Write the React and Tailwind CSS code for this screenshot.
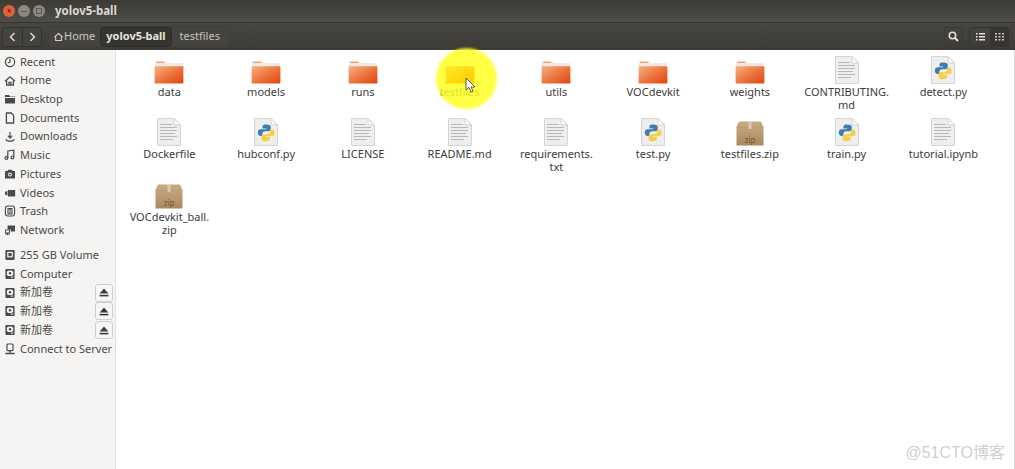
import React from "react";

const font = { fontFamily: '"Noto Sans", "Noto Sans CJK SC", sans-serif' };

const SideIcon = ({ name }) => {
  const common = { width: 12, height: 12, viewBox: "0 0 12 12", className: "shrink-0 text-[#4a4a4a]" };
  switch (name) {
    case "recent":
      return (
        <svg {...common} fill="none" stroke="currentColor" strokeWidth="1.2">
          <circle cx="6" cy="6" r="4.6" />
          <path d="M6 3v3.2L3.8 7" />
        </svg>
      );
    case "home":
      return (
        <svg {...common} fill="none" stroke="currentColor" strokeWidth="1.3">
          <path d="M1 6.2 6 1.8l5 4.4" />
          <path d="M2.6 5.4v4.8h6.8V5.4" />
          <path d="M5 10V7.4h2V10" />
        </svg>
      );
    case "desktop":
      return (
        <svg {...common} fill="currentColor">
          <path d="M1 2h4l1 1.4h5V4H1zM1 5h10v5.4H1z" />
        </svg>
      );
    case "documents":
      return (
        <svg {...common} fill="none" stroke="currentColor" strokeWidth="1.3">
          <path d="M2.4 1h4.8l2.4 2.4V11H2.4z" />
        </svg>
      );
    case "downloads":
      return (
        <svg {...common} fill="none" stroke="currentColor" strokeWidth="1.2">
          <path d="M6 1v5.4M3.8 4.6 6 7l2.2-2.4" />
          <path d="M1.8 8.2c1 2.6 7.4 2.6 8.4 0" />
        </svg>
      );
    case "music":
      return (
        <svg {...common} fill="none" stroke="currentColor" strokeWidth="1.2">
          <path d="M3.8 9V2l6-.8V8" />
          <circle cx="2.4" cy="9" r="1.4" />
          <circle cx="8.4" cy="8.4" r="1.4" />
        </svg>
      );
    case "pictures":
      return (
        <svg {...common}>
          <path d="M1 3h2.4l.8-1.2h3.6L8.6 3H11v7.4H1z" fill="currentColor" />
          <circle cx="6" cy="6.6" r="2" fill="#f5f4f2" />
          <circle cx="6" cy="6.6" r="1" fill="currentColor" />
        </svg>
      );
    case "videos":
      return (
        <svg {...common} fill="currentColor">
          <path d="M4 3h7.2v6.4H4zM1 5l2.4-1.2v4.8L1 7.4z" />
        </svg>
      );
    case "trash":
      return (
        <svg {...common} fill="none" stroke="currentColor" strokeWidth="1.1">
          <rect x="1.4" y="1" width="9.2" height="10" rx="2.4" />
          <path d="M3.4 3.6h5.2M4 3.6V9h4V3.6M6 4v5" />
        </svg>
      );
    case "network":
      return (
        <svg {...common} fill="currentColor">
          <path d="M3.6 1.4H11v6H6.8V5.4H3.6z" />
          <path d="M1 5.4h5v4.2H4.4v.8h1.4v.6H1.2v-.6h1.4v-.8H1z" />
          <rect x="2" y="6.4" width="3" height="2" fill="#f5f4f2" />
        </svg>
      );
    case "volume":
      return (
        <svg {...common}>
          <rect x="1.4" y="1" width="9.2" height="10" rx="1" fill="currentColor" />
          <rect x="3.2" y="2.8" width="5.6" height="5.6" fill="#f5f4f2" />
          <rect x="4.4" y="4" width="3.2" height="3.2" fill="currentColor" />
        </svg>
      );
    case "drive":
      return (
        <svg {...common}>
          <rect x="1.4" y="1" width="9.2" height="10" rx="1" fill="currentColor" />
          <rect x="2.8" y="2.4" width="6.4" height="5.6" rx="2" fill="#f5f4f2" />
          <circle cx="6" cy="5.2" r="1.2" fill="currentColor" />
          <rect x="6.8" y="8.6" width="2.4" height="1" fill="#f5f4f2" />
        </svg>
      );
    default:
      return (
        <svg {...common} fill="none" stroke="currentColor" strokeWidth="1.2">
          <rect x="3" y="1" width="6" height="6.6" rx="1" />
          <path d="M6 7.6v2M1.4 10.4h9.2" strokeWidth="1.5" />
        </svg>
      );
  }
};

const Eject = () => (
  <button className="w-[18px] h-[18px] flex items-center justify-center rounded-[3px] border border-[#d0cfcc] bg-[#f8f7f6]">
    <svg width="10" height="9" viewBox="0 0 10 9" fill="#3c3c3c">
      <path d="M5 0.5 9.4 5.6H0.6z" />
      <rect x="0.6" y="6.8" width="8.8" height="1.6" />
    </svg>
  </button>
);

const places = [
  ["recent", "Recent"],
  ["home", "Home"],
  ["desktop", "Desktop"],
  ["documents", "Documents"],
  ["downloads", "Downloads"],
  ["music", "Music"],
  ["pictures", "Pictures"],
  ["videos", "Videos"],
  ["trash", "Trash"],
  ["network", "Network"],
];

const devices = [
  ["volume", "255 GB Volume"],
  ["drive", "Computer"],
  ["drive", "新加卷", true],
  ["drive", "新加卷", true],
  ["drive", "新加卷", true],
  ["server", "Connect to Server"],
];

const SideRow = ({ icon, label, eject }) => (
  <div className="h-[18.7px] flex items-center pl-[4px] pr-[2px] gap-[4px] whitespace-nowrap">
    <SideIcon name={icon} />
    <span className="flex-1 text-[11px] text-[#4a4a4a]">{label}</span>
    {eject && <Eject />}
  </div>
);

const Folder = ({ lit }) => {
  const id = lit ? "folderLit" : "folderOrange";
  return (
    <svg width="30" height="24" viewBox="0 0 30 24" className={lit ? "relative z-10" : ""}>
      <defs>
        <linearGradient id={id} x1="0" y1="0" x2="1" y2="1">
          <stop offset="0" stopColor={lit ? "#ffe92a" : "#f6b184"} />
          <stop offset="0.55" stopColor={lit ? "#ffd80f" : "#ec7138"} />
          <stop offset="1" stopColor={lit ? "#ffc800" : "#de4413"} />
        </linearGradient>
      </defs>
      {!lit && <path d="M1 2.5Q1 1 2.4 1H11l2 2h15.6Q29 3 29 4.5V8H1z" fill="#efe9e2" />}
      {!lit && <rect x="2.4" y="1.8" width="7.6" height="1" fill="#ee8a55" />}
      <path d="M0.6 6.2H29.4V22.4Q29.4 23.6 28 23.6H2Q0.6 23.6 0.6 22.4z" fill={`url(#${id})`} />
    </svg>
  );
};

const Doc = ({ children }) => (
  <svg width="24" height="28" viewBox="0 0 24 28">
    <path d="M0.5 0.5H17L23.5 7V27.5H0.5z" fill="#eeeeec" stroke="#d4d4d2" />
    <path d="M17 0.5V7H23.5z" fill="#fbfbfa" stroke="#d4d4d2" />
    {children || (
      <g fill="#b8b8b6">
        <rect x="3" y="6" width="12" height="1" />
        <rect x="3" y="9" width="17" height="1" />
        <rect x="3" y="12" width="17" height="1" />
        <rect x="3" y="15" width="15" height="1" />
        <rect x="3" y="18" width="17" height="1" />
        <rect x="3" y="21" width="13" height="1" />
      </g>
    )}
  </svg>
);

const Python = () => (
  <Doc>
    <path d="M12 6.5C8.4 6.5 8.5 8 8.5 9v1.5H12.3v.7H6.8C5 11.2 3.8 12.4 3.8 14.6s1.2 3.4 2.8 3.4H8.3v-2c0-1.7 1.4-2.8 2.9-2.8h3.5c1.2 0 2.1-1 2.1-2.2V9c0-1.4-1.4-2.5-4.8-2.5z" fill="#3f7cae" />
    <path d="M12.4 23C16 23 15.9 21.5 15.9 20.5V19H12.1v-.7H17.6c1.8 0 3-1.2 3-3.4s-1.2-3.4-2.8-3.4H16.1v2c0 1.7-1.4 2.8-2.9 2.8H9.7c-1.2 0-2.1 1-2.1 2.2v2.5c0 1.4 1.4 2.5 4.8 2.5z" fill="#f3cf4c" />
  </Doc>
);

const Zip = () => (
  <svg width="28" height="25" viewBox="0 0 28 25">
    <defs>
      <linearGradient id="box" x1="0" y1="0" x2="0" y2="1">
        <stop offset="0" stopColor="#c9ab83" />
        <stop offset="1" stopColor="#ab895f" />
      </linearGradient>
    </defs>
    <path d="M3 0.5H25L27.5 6V24.5H0.5V6z" fill="url(#box)" />
    <path d="M0.5 6.5H27.5" stroke="#bd9f77" />
    <rect x="12.5" y="1" width="3" height="7" fill="#dcc9ae" />
    <text x="14" y="21.5" textAnchor="middle" fontSize="8" fill="#6d5234" fontFamily="Noto Sans">zip</text>
  </svg>
);

const files = [
  ["folder", "data"],
  ["folder", "models"],
  ["folder", "runs"],
  ["lit", "testfiles"],
  ["folder", "utils"],
  ["folder", "VOCdevkit"],
  ["folder", "weights"],
  ["doc", "CONTRIBUTING.\nmd"],
  ["py", "detect.py"],
  ["doc", "Dockerfile"],
  ["py", "hubconf.py"],
  ["doc", "LICENSE"],
  ["doc", "README.md"],
  ["doc", "requirements.\ntxt"],
  ["py", "test.py"],
  ["zip", "testfiles.zip"],
  ["py", "train.py"],
  ["doc", "tutorial.ipynb"],
  ["zip", "VOCdevkit_ball.\nzip"],
];

const FileItem = ({ kind, label }) => (
  <div className="flex flex-col items-center">
    <div className="h-[28px] flex items-end">
      {kind === "folder" && <Folder />}
      {kind === "lit" && <Folder lit />}
      {kind === "doc" && <Doc />}
      {kind === "py" && <Python />}
      {kind === "zip" && <Zip />}
    </div>
    <div className="mt-[1px] text-[11px] leading-[13px] text-[#3c3c3c] text-center whitespace-pre">{label}</div>
  </div>
);

const WinButton = ({ color, children }) => (
  <div className={`w-[12px] h-[12px] rounded-full flex items-center justify-center ${color}`}>{children}</div>
);

const Crumb = ({ active, children }) => (
  <div
    className={`h-full flex items-center text-[11px] ${
      active ? "px-[5px] bg-[#37352f] font-bold text-[#e6e3dc] rounded-[3px] border border-[#2e2c28]" : "px-[8px] text-[#c4c1b9]"
    }`}
  >
    {children}
  </div>
);

export default function App() {
  return (
    <div style={font} className="w-[1015px] h-[469px] flex flex-col overflow-hidden bg-white">
      <div className="h-[22px] shrink-0 flex items-center pl-[3px] bg-gradient-to-b from-[#3c3a35] to-[#4f4d47]">
        <div className="flex gap-[3px]">
          <WinButton color="bg-[#e2603a]">
            <span className="text-[8px] leading-none font-bold text-[#5e2412]">×</span>
          </WinButton>
          <WinButton color="bg-[#8a8880]">
            <span className="w-[6px] h-[1px] bg-[#5a5850]" />
          </WinButton>
          <WinButton color="bg-[#8a8880]">
            <span className="w-[6px] h-[6px] border border-[#5a5850]" />
          </WinButton>
        </div>
        <span className="ml-[10px] text-[11.5px] font-bold text-[#dcd9d0]">yolov5-ball</span>
      </div>

      <div className="h-[28px] shrink-0 flex items-center pl-[2px] pr-[6px] py-[3px] bg-gradient-to-b from-[#47453f] to-[#3d3b35] border-t border-[#37352f]">
        <div className="h-[20px] w-[40px] flex rounded-[3px] border border-[#35332e] bg-[#45433d]">
          <div className="w-[20px] flex items-center justify-center border-r border-[#35332e]">
            <svg width="7" height="10" viewBox="0 0 7 10" fill="none" stroke="#e2dfd8" strokeWidth="1.4"><path d="M5.5 1 1.5 5l4 4" /></svg>
          </div>
          <div className="flex-1 flex items-center justify-center">
            <svg width="7" height="10" viewBox="0 0 7 10" fill="none" stroke="#e2dfd8" strokeWidth="1.4"><path d="M1.5 1l4 4-4 4" /></svg>
          </div>
        </div>
        <div className="ml-[6px] h-[22px] flex items-center rounded-[3px] border border-[#403e38] bg-[#45433d]">
          <div className="h-full flex items-center pl-[4px] pr-[5px] gap-[0px] text-[11px] text-[#c9c6be]">
            <svg width="11" height="10" viewBox="0 0 12 12" fill="none" stroke="#d8d5cd" strokeWidth="1.3">
              <path d="M1 6.2 6 1.8l5 4.4" />
              <path d="M2.6 5.4v4.8h6.8V5.4" />
            </svg>
            Home
          </div>
          <Crumb active>yolov5-ball</Crumb>
          <Crumb>testfiles</Crumb>
        </div>
        <div className="ml-auto w-[19px] h-[20px] flex items-center justify-center rounded-[3px] border border-[#3a3833]">
          <svg width="11" height="11" viewBox="0 0 11 11" fill="none" stroke="#e4e1da" strokeWidth="1.5">
            <circle cx="4.5" cy="4.5" r="3.2" />
            <path d="M7 7l3 3" strokeWidth="1.9" />
          </svg>
        </div>
        <div className="ml-[6px] h-[20px] w-[40px] flex rounded-[3px] border border-[#35332e]">
          <div className="w-[20px] flex items-center justify-center">
            <svg width="9" height="8" viewBox="0 0 9 8" fill="#e4e1da">
              <path d="M0 0h1.6v1.6H0zM3 0h6v1.6H3zM0 3h1.6v1.6H0zM3 3h6v1.6H3zM0 6h1.6v1.6H0zM3 6h6v1.6H3z" />
            </svg>
          </div>
          <div className="flex-1 flex items-center justify-center bg-[#37352f]">
            <svg width="9" height="8" viewBox="0 0 9 8" fill="#c9c6be">
              <path d="M0 0h2v1.6H0zM3.5 0h2v1.6h-2zM7 0h2v1.6H7zM0 3h2v1.6H0zM3.5 3h2v1.6h-2zM7 3h2v1.6H7zM0 6h2v1.6H0zM3.5 6h2v1.6h-2zM7 6h2v1.6H7z" />
            </svg>
          </div>
        </div>
      </div>

      <div className="flex-1 flex min-h-0">
        <aside className="w-[116px] shrink-0 bg-[#f5f4f2] border-r border-[#e2e1de] pt-[2.6px]">
          {places.map(([icon, label]) => (
            <SideRow key={label} icon={icon} label={label} />
          ))}
          <div className="h-[6.5px]" />
          {devices.map(([icon, label, eject], i) => (
            <SideRow key={i} icon={icon} label={label} eject={eject} />
          ))}
        </aside>

        <main className="relative flex-1 border-r border-[#d8d8d6] pl-[5px] pt-[5.5px]">
          <div className="grid grid-cols-[repeat(9,96.75px)] auto-rows-[62.5px]">
            {files.map(([kind, label]) => (
              <FileItem key={label} kind={kind} label={label} />
            ))}
          </div>
          <div className="absolute left-[320px] top-[-2px] w-[61px] h-[61px] rounded-full bg-[#ffff22]/85 blur-[1px]" />
          <svg className="absolute left-[349px] top-[27px] z-20" width="11" height="16" viewBox="0 0 11 16">
            <path d="M1 1v12l3-2.6L6 15l2-1-2-4h4z" fill="#fff" stroke="#333" strokeWidth="0.8" />
          </svg>
          <div className="absolute right-[9px] bottom-[8px] text-[16px] leading-none text-[#cfcfcf] whitespace-nowrap" style={{ fontFamily: '"Liberation Sans", "Noto Sans CJK SC", sans-serif' }}>
            @51CTO博客
          </div>
        </main>
      </div>
    </div>
  );
}
